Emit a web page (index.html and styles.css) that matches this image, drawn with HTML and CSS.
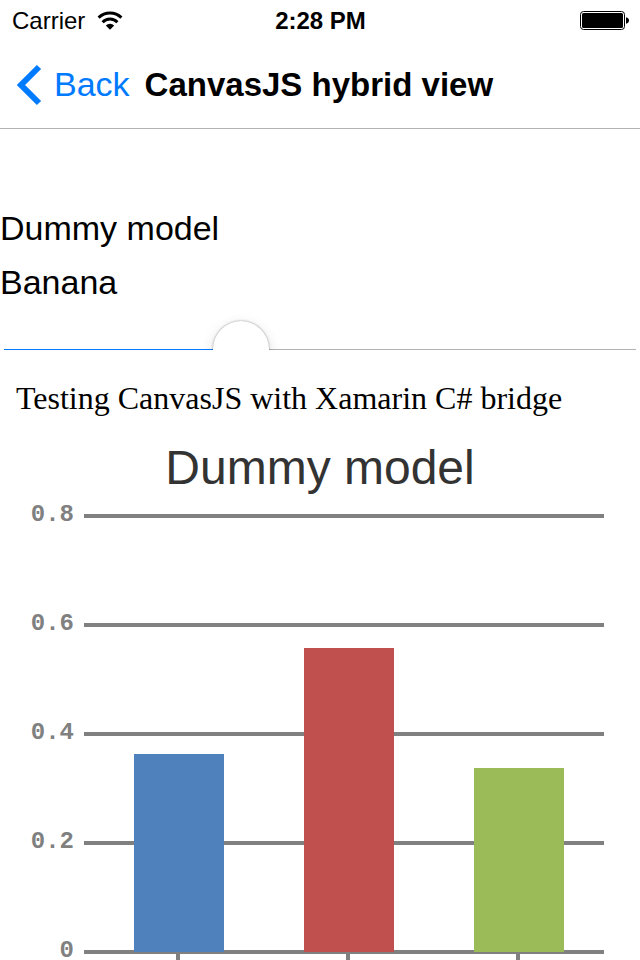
FILE: index.html
```html
<!DOCTYPE html>
<html lang="en">
<head>
<meta charset="utf-8">
<meta name="viewport" content="width=device-width, initial-scale=1">
<title>CanvasJS hybrid view</title>
<link rel="stylesheet" href="styles.css">
</head>
<body>
<div class="status">
  <div class="carrier">
    <span>Carrier</span>
    <svg class="wifi" width="26" height="20" viewBox="0 0 26 20" aria-hidden="true">
      <path d="M1.6 6.6A16.3 16.3 0 0 1 24.4 6.6" fill="none" stroke="#000" stroke-width="3"/>
      <path d="M5.6 11.2A10.4 10.4 0 0 1 20.4 11.2" fill="none" stroke="#000" stroke-width="3"/>
      <path d="M8.8 14.4A6.3 6.3 0 0 1 17.2 14.4L13 18.8Z"/>
    </svg>
  </div>
  <time class="clock">2:28 PM</time>
  <svg class="battery" width="49" height="19" viewBox="0 0 49 19" aria-hidden="true">
    <rect x=".5" y=".5" width="44" height="18" rx="3" fill="none" stroke="#000"/>
    <rect x="2" y="2" width="41" height="15" rx="1.5"/>
    <path d="M46 6.3C48 6.6 49 8 49 9.5S48 12.4 46 12.7Z"/>
  </svg>
</div>
<header class="navbar">
  <button class="back" type="button">
    <svg width="26" height="42" viewBox="0 0 26 42" aria-hidden="true">
      <path d="M22 3L4 21L22 39" fill="none" stroke="#007aff" stroke-width="6"/>
    </svg>
    <span>Back</span>
  </button>
  <h1 class="title">CanvasJS hybrid view</h1>
</header>
<section class="form">
  <p class="name">Dummy model</p>
  <label class="name" for="amount">Banana</label>
  <div class="slider">
    <input id="amount" type="range" min="0" max="1" step="0.001" value="0.363">
  </div>
</section>
<main class="web">
  <p class="intro">Testing CanvasJS with Xamarin C# bridge</p>
  <h2 class="chart-title">Dummy model</h2>
  <div class="chart">
    <div class="axis">
      <span>0.8</span><span>0.6</span><span>0.4</span><span>0.2</span><span>0</span>
    </div>
    <div class="plot">
      <div class="lines"><i></i><i></i><i></i><i></i><i></i></div>
      <div class="bars">
        <div class="bar blue" style="height:45.4%"></div>
        <div class="bar red" style="height:69.7%"></div>
        <div class="bar green" style="height:42.2%"></div>
      </div>
      <div class="ticks"><i></i><i></i><i></i></div>
    </div>
  </div>
</main>
</body>
</html>
```
FILE: styles.css
```css
* {
  box-sizing: border-box;
}

body {
  margin: 0;
  background: #fff;
  color: #000;
  font-family: "Liberation Sans", Arial, sans-serif;
}

p, h1, h2 {
  margin: 0;
}

svg {
  display: block;
}

.status {
  display: grid;
  grid-template-columns: 1fr auto 1fr;
  align-items: center;
  height: 41px;
  padding: 0 11px 0 12px;
  font-size: 24px;
}

.carrier {
  display: flex;
  align-items: center;
  gap: 12px;
}

.clock {
  font-weight: bold;
}

.battery {
  justify-self: end;
}

.navbar {
  display: flex;
  align-items: center;
  gap: 15px;
  height: 88px;
  padding: 0 17px;
  border-bottom: 1px solid #b2b2b2;
}

.back {
  display: flex;
  align-items: center;
  gap: 11px;
  padding: 0;
  border: 0;
  background: none;
  color: #007aff;
  font: inherit;
  font-size: 34px;
}

.title {
  font-size: 33px;
}

.form {
  display: flex;
  flex-direction: column;
  padding-top: 72px;
}

.name {
  height: 54px;
  font-size: 34px;
  line-height: 54px;
}

.slider {
  height: 41px;
  padding: 12px 4px 0;
  overflow: hidden;
}

.slider input {
  display: block;
  width: 100%;
  height: 56px;
  margin: 0;
  appearance: none;
  background:
    linear-gradient(#007aff, #007aff) 0 28px / 37% 2px no-repeat,
    linear-gradient(#b2b2b2, #b2b2b2) 0 28px / 100% 2px no-repeat;
  box-shadow: none;
}

.slider input::-webkit-slider-thumb {
  appearance: none;
  width: 56px;
  height: 56px;
  border-radius: 50%;
  background: #fff;
  box-shadow: 0 0 2px rgba(0, 0, 0, 0.45), 0 4px 14px rgba(0, 0, 0, 0.14);
}

.web {
  padding-top: 28px;
}

.intro {
  padding: 0 16px;
  font-family: "Liberation Serif", "Times New Roman", serif;
  font-size: 32px;
  line-height: 40px;
}

.chart-title {
  margin-top: 22px;
  color: #333;
  font-size: 48px;
  font-weight: normal;
  line-height: 56px;
  text-align: center;
}

.chart {
  display: grid;
  grid-template-columns: 74px 1fr;
  gap: 10px;
  padding: 6px 36px 0 0;
}

.axis {
  display: grid;
  grid-template-rows: repeat(4, 109px) 18px;
  color: #808080;
  font-family: "Liberation Mono", "Courier New", monospace;
  font-size: 24px;
  font-weight: bold;
  line-height: 18px;
  text-align: right;
  padding-top: 4px;
}

.plot {
  display: grid;
  grid-template-rows: 440px 6px;
  padding-top: 12px;
}

.lines {
  grid-area: 1 / 1;
  display: flex;
  flex-direction: column;
  justify-content: space-between;
}

.lines i {
  height: 4px;
  background: #808080;
}

.bars {
  grid-area: 1 / 1;
  display: grid;
  grid-template-columns: repeat(3, 1fr);
  align-items: end;
  justify-items: center;
  margin: 2px 0;
  padding-left: 10px;
}

.bar {
  width: 53%;
}

.blue {
  background: #4f81bc;
}

.red {
  background: #c0504e;
}

.green {
  background: #9bbb58;
}

.ticks {
  display: grid;
  grid-template-columns: repeat(3, 1fr);
  justify-items: center;
  padding: 0 1px 0 9px;
}

.ticks i {
  width: 4px;
  background: #808080;
}
```
